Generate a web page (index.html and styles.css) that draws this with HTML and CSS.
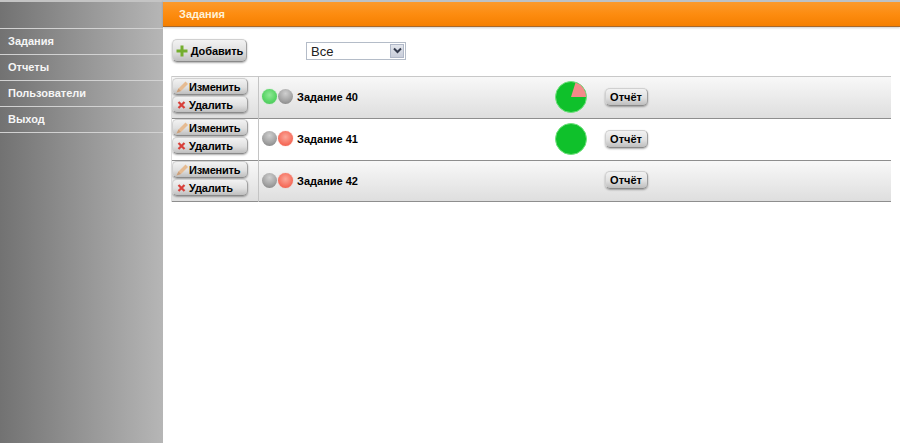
FILE: index.html
```html
<!DOCTYPE html>
<html lang="ru">
<head>
    <meta charset="UTF-8">
    <title>Задания</title>
    <link rel="stylesheet" href="styles.css">
</head>
<body>
    <div class="layout">
        <div class="sidebar">
            <a class="menu-item" href="#">Задания</a>
            <a class="menu-item" href="#">Отчеты</a>
            <a class="menu-item" href="#">Пользователи</a>
            <a class="menu-item" href="#">Выход</a>
        </div>
        <div class="main">
            <div class="title-bar">Задания</div>
            <div class="toolbar">
                <button class="btn btn-add">
                    <svg width="12" height="12" viewBox="0 0 12 12"><path d="M4.5 0.5h3v4h4v3h-4v4h-3v-4h-4v-3h4z" fill="#74ae2e"/></svg>
                    Добавить
                </button>
                <div class="filter">
                    <select class="filter-select">
                        <option>Все</option>
                    </select>
                    <span class="filter-arrow">
                        <svg width="9" height="7" viewBox="0 0 9 7"><path d="M1 1.5l3.5 3.5 3.5-3.5" fill="none" stroke="#333a4c" stroke-width="2"/></svg>
                    </span>
                </div>
            </div>
            <!-- Task list -->
            <table class="tasks">
                <tr class="odd">
                    <td class="actions">
                        <button class="btn btn-small"><svg width="13" height="12" viewBox="0 0 13 12"><path d="M0.5 11.5l2-4 7-7 2.5 2.5-7 7z" fill="#e6bb92"/><path d="M0.5 11.5l2-4 2.5 2.5z" fill="#c99f7c"/></svg>Изменить</button>
                        <button class="btn btn-small"><svg width="13" height="10" viewBox="0 0 13 10"><path d="M2.5 2l6 6M8.5 2l-6 6" stroke="#d8403a" stroke-width="2.2"/></svg>Удалить</button>
                    </td>
                    <td class="name-cell">
                        <span class="lamp lamp-green"></span><span class="lamp lamp-grey"></span>
                        <span class="task-name">Задание 40</span>
                    </td>
                    <td class="chart-cell">
                        <svg class="pie" width="32" height="32" viewBox="0 0 32 32">
                            <circle cx="16" cy="16" r="15.5" fill="#0fc12b" stroke="#6fe07c"/>
                            <path d="M16 16L20.5 1.6A15.2 15.2 0 0 1 31.2 16z" fill="#f48a8a"/>
                        </svg>
                    </td>
                    <td class="report-cell"><button class="btn btn-report">Отчёт</button></td>
                </tr>
                <tr>
                    <td class="actions">
                        <button class="btn btn-small"><svg width="13" height="12" viewBox="0 0 13 12"><path d="M0.5 11.5l2-4 7-7 2.5 2.5-7 7z" fill="#e6bb92"/><path d="M0.5 11.5l2-4 2.5 2.5z" fill="#c99f7c"/></svg>Изменить</button>
                        <button class="btn btn-small"><svg width="13" height="10" viewBox="0 0 13 10"><path d="M2.5 2l6 6M8.5 2l-6 6" stroke="#d8403a" stroke-width="2.2"/></svg>Удалить</button>
                    </td>
                    <td class="name-cell">
                        <span class="lamp lamp-grey"></span><span class="lamp lamp-red"></span>
                        <span class="task-name">Задание 41</span>
                    </td>
                    <td class="chart-cell">
                        <svg class="pie" width="32" height="32" viewBox="0 0 32 32">
                            <circle cx="16" cy="16" r="15.5" fill="#0fc12b" stroke="#6fe07c"/>
                        </svg>
                    </td>
                    <td class="report-cell"><button class="btn btn-report">Отчёт</button></td>
                </tr>
                <tr class="odd row-last">
                    <td class="actions">
                        <button class="btn btn-small"><svg width="13" height="12" viewBox="0 0 13 12"><path d="M0.5 11.5l2-4 7-7 2.5 2.5-7 7z" fill="#e6bb92"/><path d="M0.5 11.5l2-4 2.5 2.5z" fill="#c99f7c"/></svg>Изменить</button>
                        <button class="btn btn-small"><svg width="13" height="10" viewBox="0 0 13 10"><path d="M2.5 2l6 6M8.5 2l-6 6" stroke="#d8403a" stroke-width="2.2"/></svg>Удалить</button>
                    </td>
                    <td class="name-cell">
                        <span class="lamp lamp-grey"></span><span class="lamp lamp-red"></span>
                        <span class="task-name">Задание 42</span>
                    </td>
                    <td class="chart-cell"></td>
                    <td class="report-cell"><button class="btn btn-report">Отчёт</button></td>
                </tr>
            </table>
        </div>
    </div>
</body>
</html>
```
FILE: styles.css
```css
html, body {
    margin: 0;
    height: 100%;
    overflow: hidden;
    background: #fff;
    font-family: "Liberation Sans", Arial, sans-serif;
    font-size: 11px;
}
.layout {
    display: flex;
    height: 443px;
}
.sidebar {
    width: 163px;
    flex-shrink: 0;
    box-sizing: border-box;
    padding-top: 26px;
    border-top: 2px solid #c4c4c4;
    background: linear-gradient(90deg, #727272 0%, #b6b6b6 100%);
}
.menu-item {
    display: block;
    height: 25px;
    line-height: 25px;
    padding-left: 8px;
    border-top: 1px solid #d2d2d2;
    color: #f6f6f6;
    font-weight: bold;
    text-decoration: none;
}
.menu-item:last-child {
    border-bottom: 1px solid #d2d2d2;
}
.main {
    flex: 1;
    min-width: 0;
}
.title-bar {
    height: 24px;
    line-height: 24px;
    padding-left: 16px;
    border-top: 2px solid #bcc2c6;
    border-bottom: 1px solid #a8682a;
    background: linear-gradient(180deg, #fb9a2c 0%, #fd8c10 50%, #f57f00 100%);
    box-shadow: 0 1px 2px #0003;
    color: #fff2d8;
    font-weight: bold;
}
.toolbar {
    display: flex;
    align-items: center;
    height: 23px;
    margin: 12px 0 14px 9px;
}
.btn {
    display: inline-flex;
    align-items: center;
    justify-content: center;
    box-sizing: border-box;
    padding: 0;
    border: 1px solid #d0d0d0;
    border-bottom-color: #8a8a8a;
    border-right-color: #a0a0a0;
    border-radius: 5px;
    background: linear-gradient(180deg, #f2f2f2 0%, #e0e0e0 55%, #bebebe 100%);
    box-shadow: 0 1px 2px #0005;
    color: #000;
    font-family: inherit;
    font-size: 11px;
    font-weight: bold;
}
.btn-add {
    width: 75px;
    height: 23px;
    gap: 3px;
    letter-spacing: -0.1px;
}
.filter {
    display: flex;
    width: 100px;
    height: 18px;
    box-sizing: border-box;
    margin-left: 59px;
    border: 1px solid #b4bcc8;
    background: #fff;
}
.filter-select {
    flex: 1;
    min-width: 0;
    padding: 1px 0 0 4px;
    border: 0;
    background: transparent;
    appearance: none;
    color: #222;
    font-family: inherit;
    font-size: 13px;
}
.filter-arrow {
    display: flex;
    align-items: center;
    justify-content: center;
    width: 14px;
    margin: 1px;
    border: 1px solid #b0b8c8;
    box-sizing: border-box;
    background: linear-gradient(180deg, #e2e5ec 0%, #c8cdda 100%);
}
.tasks {
    width: 720px;
    margin-left: 8px;
    border-collapse: collapse;
    border-top: 1px solid #c8c8c8;
}
.tasks tr {
    height: 42px;
    border-bottom: 1px solid #8e8e8e;
}
.tasks tr.row-last {
    height: 41px;
}
.tasks tr.odd {
    background: linear-gradient(180deg, #f8f8f8 0%, #dedede 100%);
}
.tasks td {
    box-sizing: border-box;
    padding: 0 0 2px;
    vertical-align: middle;
}
.tasks .actions {
    width: 87px;
    padding: 0;
    vertical-align: top;
    border-right: 1px solid #c4c4c4;
    border-left: 1px solid #dcdcdc;
}
.tasks tr:first-child .actions {
    padding-top: 1px;
}
.btn-small {
    display: flex;
    justify-content: flex-start;
    width: 76px;
    height: 17px;
    margin: 0 0 1px;
    padding-left: 3px;
    letter-spacing: -0.2px;
}
.tasks .name-cell {
    width: 296px;
    padding-left: 3px;
}
.lamp {
    display: inline-block;
    width: 15px;
    height: 15px;
    margin-right: 1px;
    border-radius: 50%;
    vertical-align: middle;
}
.lamp-green {
    background: radial-gradient(circle at 50% 40%, #8fe896 0%, #5ad567 55%, #45c155 100%);
    box-shadow: 0 0 1px #6fdc7c;
}
.lamp-grey {
    background: radial-gradient(circle at 50% 30%, #cfcfcf 0%, #a4a4a4 55%, #7c7c7c 100%);
}
.lamp-red {
    background: radial-gradient(circle at 50% 40%, #fba89a 0%, #f6705f 60%, #ea5240 100%);
    box-shadow: 0 0 1px #f47a6a;
}
.task-name {
    font-size: 11px;
    font-weight: bold;
    vertical-align: middle;
}
.chart-cell {
    width: 50px;
}
.pie {
    display: block;
}
.btn-report {
    width: 43px;
    height: 18px;
}
```
